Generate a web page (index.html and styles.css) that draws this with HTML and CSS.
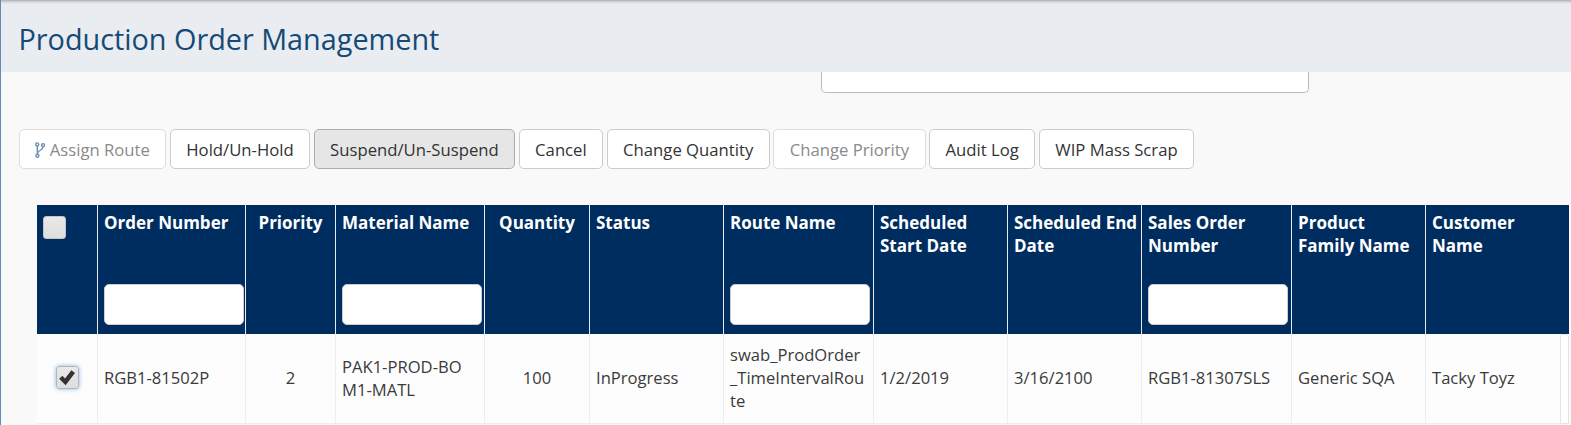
FILE: index.html
```html
<!DOCTYPE html>
<html lang="en">
<head>
    <meta charset="UTF-8">
    <meta name="viewport" content="width=device-width, initial-scale=1.0">
    <title>Production Order Management</title>
    <link rel="stylesheet" href="styles.css">
</head>
<body>
    <div class="page">
        <header class="page-header">
            <h1>Production Order Management</h1>
        </header>
        <div class="search-panel"></div>
        <div class="toolbar">
            <button class="btn" disabled>
                <svg class="btn-icon" viewBox="0 0 10 16" width="10" height="16" fill="none" stroke="#6f90b4" stroke-width="1.4">
                    <circle cx="2.2" cy="2.4" r="1.5"/>
                    <circle cx="8" cy="3.2" r="1.5"/>
                    <circle cx="2.4" cy="13.8" r="1.5"/>
                    <path d="M2.3 4v8.4M8 4.8C8 8.4 3 8 2.5 11.5"/>
                </svg>
                Assign Route
            </button>
            <button class="btn">Hold/Un-Hold</button>
            <button class="btn btn-active">Suspend/Un-Suspend</button>
            <button class="btn">Cancel</button>
            <button class="btn">Change Quantity</button>
            <button class="btn" disabled>Change Priority</button>
            <button class="btn">Audit Log</button>
            <button class="btn">WIP Mass Scrap</button>
        </div>
        <div class="grid-wrap">
            <table class="grid">
                <colgroup>
                    <col class="w61">
                    <col class="w148">
                    <col class="w90">
                    <col class="w149">
                    <col class="w105">
                    <col class="w134">
                    <col class="w150">
                    <col class="w134">
                    <col class="w134">
                    <col class="w150">
                    <col class="w134">
                    <col class="w143">
                </colgroup>
                <thead>
                    <tr>
                        <th><span class="check"></span></th>
                        <th><div class="col-title">Order Number</div><input class="filter" type="text"></th>
                        <th class="center"><div class="col-title">Priority</div></th>
                        <th><div class="col-title">Material Name</div><input class="filter" type="text"></th>
                        <th class="center"><div class="col-title">Quantity</div></th>
                        <th><div class="col-title">Status</div></th>
                        <th><div class="col-title">Route Name</div><input class="filter" type="text"></th>
                        <th><div class="col-title">Scheduled<br>Start Date</div></th>
                        <th><div class="col-title">Scheduled End<br>Date</div></th>
                        <th><div class="col-title">Sales Order<br>Number</div><input class="filter" type="text"></th>
                        <th><div class="col-title">Product<br>Family Name</div></th>
                        <th><div class="col-title">Customer<br>Name</div></th>
                    </tr>
                </thead>
                <tbody>
                    <tr>
                        <td class="center">
                            <span class="check check-on">
                                <svg viewBox="0 0 16 16" width="19" height="19"><path d="M1 9l2.7-2.5 2.2 2.3 5.4-6.9 3 2.3-7.9 10.4z" fill="#333"/></svg>
                            </span>
                        </td>
                        <td>RGB1-81502P</td>
                        <td class="center">2</td>
                        <td>PAK1-PROD-BO<br>M1-MATL</td>
                        <td class="center">100</td>
                        <td>InProgress</td>
                        <td>swab_ProdOrder<br>_TimeIntervalRou<br>te</td>
                        <td>1/2/2019</td>
                        <td>3/16/2100</td>
                        <td>RGB1-81307SLS</td>
                        <td>Generic SQA</td>
                        <td>Tacky Toyz</td>
                    </tr>
                </tbody>
            </table>
            <div class="row-scroll"></div>
        </div>
    </div>
</body>
</html>
```

FILE: styles.css
```css
html, body {
    margin: 0;
    height: 425px;
    overflow: hidden;
}
body {
    font-family: "Open Sans", sans-serif;
    font-size: 16.6px;
    line-height: 23px;
    color: #3a3a3a;
    background-color: #f9f9f9;
}
.page {
    height: 425px;
    border-left: 1px solid #5f8db8;
    box-sizing: border-box;
}
.page-header {
    height: 72px;
    box-sizing: border-box;
    padding: 20px 0 0 17.5px;
    background: linear-gradient(to bottom, #a9adb5 0, #d5d8de 2px, #e9ecf1 4px);
}
h1 {
    margin: 0;
    font-size: 28.8px;
    line-height: 37px;
    font-weight: 400;
    color: #164a76;
}
.search-panel {
    width: 486px;
    height: 20px;
    margin-left: 820px;
    background-color: #fff;
    border: 1px solid #bbb;
    border-top: none;
    border-radius: 0 0 5px 5px;
}
.toolbar {
    display: flex;
    gap: 3.6px;
    margin: 36px 0 0 18px;
}
.btn {
    height: 40px;
    padding: 1px 15.4px 0;
    font-family: inherit;
    font-size: 16.7px;
    color: #333;
    background-color: #fff;
    border: 1px solid #ccc;
    border-radius: 5px;
    white-space: nowrap;
}
.btn:disabled {
    color: #8a8a8a;
    border-color: #ddd;
}
.btn-active {
    background-color: #e6e6e6;
    border-color: #adadad;
}
.btn-icon {
    vertical-align: -2px;
}
.grid-wrap {
    position: relative;
    margin: 36px 0 0 36px;
}
.grid {
    width: 1532px;
    table-layout: fixed;
    border-collapse: separate;
    border-spacing: 0;
}
.w61 { width: 61px; }
.w90 { width: 90px; }
.w105 { width: 105px; }
.w134 { width: 134px; }
.w143 { width: 143px; }
.w148 { width: 148px; }
.w149 { width: 149px; }
.w150 { width: 150px; }
.grid th {
    height: 129px;
    box-sizing: border-box;
    padding: 6px 6px 0;
    vertical-align: top;
    text-align: left;
    font-size: 17px;
    font-weight: 700;
    color: #fff;
    background-color: #002d5f;
    border-right: 1px solid #e8edf3;
    white-space: nowrap;
}
.grid th:last-child {
    border-right: none;
}
.grid th.center {
    text-align: center;
}
.col-title {
    height: 73px;
}
.filter {
    display: block;
    width: 140px;
    height: 41px;
    box-sizing: border-box;
    padding: 0 6px;
    background-color: #fff;
    border: 1px solid #ccc;
    border-radius: 5px;
}
.grid td {
    height: 90px;
    box-sizing: border-box;
    padding: 0 6px 2px;
    background-color: #fdfdfd;
    border-right: 1px solid #eee;
    border-bottom: 1px solid #eee;
}
.grid td:last-child {
    border-right: none;
}
.grid td.center {
    text-align: center;
}
.check {
    display: block;
    width: 23px;
    height: 23px;
    box-sizing: border-box;
    margin: 5px 0 0 0;
    background: linear-gradient(to bottom, #e9e9e9, #dedede);
    border: 1px solid #c4c4c4;
    border-radius: 3px;
}
.check-on {
    display: flex;
    align-items: center;
    justify-content: center;
    margin: 0 auto;
    border-color: #b5b5b5;
    box-shadow: 0 0 4px rgba(82, 150, 220, 0.7);
}
.row-scroll {
    position: absolute;
    top: 129px;
    left: 1523px;
    width: 9px;
    height: 90px;
    box-sizing: border-box;
    background-color: #fff;
    border: 1px solid #e4e4e4;
    border-radius: 3px 3px 0 0;
}
```
